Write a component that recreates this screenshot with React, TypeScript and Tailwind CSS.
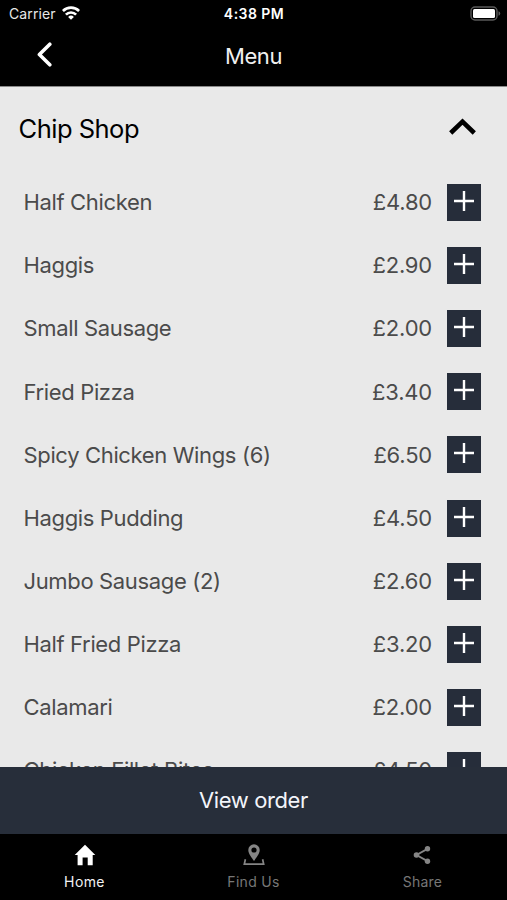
const items = [
  { name: 'Half Chicken', price: '£4.80' },
  { name: 'Haggis', price: '£2.90' },
  { name: 'Small Sausage', price: '£2.00' },
  { name: 'Fried Pizza', price: '£3.40' },
  { name: 'Spicy Chicken Wings (6)', price: '£6.50' },
  { name: 'Haggis Pudding', price: '£4.50' },
  { name: 'Jumbo Sausage (2)', price: '£2.60' },
  { name: 'Half Fried Pizza', price: '£3.20' },
  { name: 'Calamari', price: '£2.00' },
  { name: 'Chicken Fillet Bites', price: '£4.50' },
];

function StatusBar() {
  return (
    <div className="grid h-[27px] grid-cols-3 items-center pr-[6px] pl-[9px] text-[14px] leading-[27px] text-[#e8e8e8]">
      <div className="flex items-center gap-[6px]">
        <span className="tracking-[0.1px]">Carrier</span>
        <svg width="18" height="14" viewBox="0 0 18 14" fill="none" stroke="#fff" strokeWidth="2.7" className="-mt-px">
          <path d="M0.9 5a11.5 11.5 0 0 1 16.2 0" />
          <path d="M3.9 8.6a7.2 7.2 0 0 1 10.2 0" />
          <path d="M9 13.8 6.1 11a4.1 4.1 0 0 1 5.8 0z" fill="#fff" stroke="none" />
        </svg>
      </div>
      <span className="-ml-[2px] text-center font-semibold tracking-[0.45px] whitespace-nowrap text-white">4:38 PM</span>
      <svg width="31" height="15" viewBox="0 0 31 15" className="-mt-px justify-self-end">
        <rect x="1" y="1" width="26" height="13" rx="4" fill="none" stroke="#5a5a5a" strokeWidth="1.4" />
        <rect x="3" y="3" width="22" height="9" rx="1.5" fill="#fff" />
        <path d="M28.5 5.2v4.6a2.4 2.4 0 0 0 0-4.6z" fill="#5a5a5a" />
      </svg>
    </div>
  );
}

function MenuRow({ name, price }: { name: string; price: string }) {
  return (
    <li className="flex h-[63.1px] shrink-0 items-center text-[22px] text-[#4b4b4b]">
      <span className="flex-1 pt-[0.4px] tracking-[-0.35px]">{name}</span>
      <span className="mr-[15px] pt-[0.4px] tracking-[-0.2px]">{price}</span>
      <button aria-label={`Add ${name}`} className="flex h-[37px] w-[34px] justify-center bg-[#262d3a] pt-[7px]">
        <svg width="20" height="20" viewBox="0 0 20 20" stroke="#fff" strokeWidth="2.4">
          <path d="M0 10h20M10 0v20" />
        </svg>
      </button>
    </li>
  );
}

export default function App() {
  return (
    <div className="flex h-[900px] w-[507px] flex-col overflow-hidden bg-[#e9e9e9] font-['Inter','Liberation_Sans',sans-serif]">
      <header className="h-[87px] shrink-0 border-b border-[#8a8a8a] bg-black">
        <StatusBar />
        <nav className="grid h-[59px] grid-cols-3 items-center">
          <button aria-label="Back" className="-mt-[5px] ml-[37px] w-[15px]">
            <svg width="15" height="25" viewBox="0 0 15 25" fill="none" stroke="#fff" strokeWidth="3.6" strokeLinecap="round" strokeLinejoin="round">
              <path d="M12.8 2.2 2.4 12.5 12.8 22.8" />
            </svg>
          </button>
          <h1 className="-mt-px text-center text-[22px] tracking-[-0.4px] text-[#f0f0f0]">Menu</h1>
        </nav>
      </header>

      <main className="flex min-h-0 flex-1 flex-col overflow-hidden">
        <div className="flex h-[84px] shrink-0 items-center justify-between pr-[31px] pl-[18.5px]">
          <h2 className="pt-px text-[25.5px] tracking-[-0.5px] text-black">Chip Shop</h2>
          <svg width="27" height="17" viewBox="0 0 27 17" fill="none" stroke="#000" strokeWidth="4.6" className="-mt-[6px]">
            <path d="M1.7 15 13.5 3.6 25.3 15" />
          </svg>
        </div>
        <ul className="flex flex-col pr-[26px] pl-[23.5px]">
          {items.map((item) => (
            <MenuRow key={item.name} name={item.name} price={item.price} />
          ))}
        </ul>
      </main>

      <button className="h-[67px] shrink-0 bg-[#272e3a] text-[22px] tracking-[-0.4px] text-[#f3f5fa]">View order</button>

      <footer className="grid h-[66px] shrink-0 grid-cols-3 bg-black text-[14px] text-[#777]">
        <div className="flex flex-col items-center text-[#f2f2f2]">
          <svg width="22" height="22" viewBox="0 0 22 22" className="mt-[10px]" fill="#fff">
            <path d="M11 0.8 21.3 11h-2.6v10.2h-5v-7.6H8.6v7.6h-5V11H0.7z" />
          </svg>
          <span className="mt-[6px] leading-5 tracking-[0.4px]">Home</span>
        </div>
        <div className="flex flex-col items-center">
          <svg width="22" height="22" viewBox="0 0 22 22" className="mt-[10px]" fill="none" stroke="#858585">
            <path
              d="M11 17C8.6 13.4 5.3 9.8 5.3 6a5.7 5.7 0 0 1 11.4 0c0 3.8-3.3 7.4-5.7 11zM11 3.4a2.6 2.6 0 1 0 0 5.2 2.6 2.6 0 0 0 0-5.2z"
              fill="#858585"
              fillRule="evenodd"
              stroke="none"
            />
            <path d="M2.4 15.2 1.3 20.2h19.4l-1.1-5" strokeWidth="1.7" />
          </svg>
          <span className="mt-[6px] leading-5 tracking-[0.3px]">Find Us</span>
        </div>
        <div className="flex flex-col items-center">
          <svg width="18" height="20" viewBox="0 0 18 20" className="mt-[11px] -ml-px" fill="#858585" stroke="#858585">
            <path d="M14.5 3.9 3.5 10l11 6.1" fill="none" strokeWidth="1.8" />
            <circle cx="14.5" cy="3.8" r="2.7" stroke="none" />
            <circle cx="3.5" cy="10" r="2.8" stroke="none" />
            <circle cx="14.5" cy="16.2" r="2.7" stroke="none" />
          </svg>
          <span className="mt-[7px] leading-5 tracking-[0.2px]">Share</span>
        </div>
      </footer>
    </div>
  );
}
